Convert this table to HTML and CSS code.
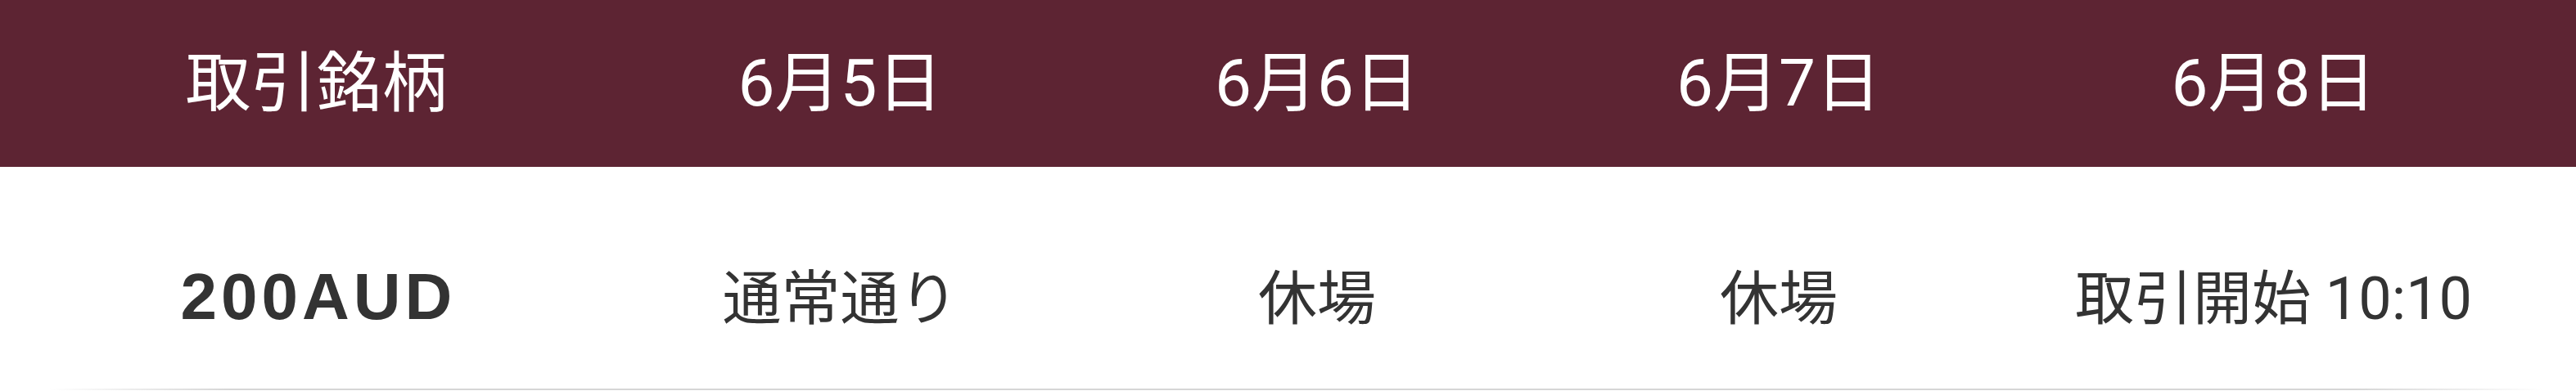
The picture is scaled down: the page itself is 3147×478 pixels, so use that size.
FILE: index.html
```html
<!DOCTYPE html>
<html lang="ja">
<head>
<meta charset="utf-8">
<title>取引スケジュール</title>
<link rel="stylesheet" href="styles.css">
</head>
<body>
<div class="schedule">
  <div class="grid">
    <div class="head">取引銘柄</div>
    <div class="head">6月5日</div>
    <div class="head">6月6日</div>
    <div class="head">6月7日</div>
    <div class="head">6月8日</div>
    <div class="cell sym">200AUD</div>
    <div class="cell">通常通り</div>
    <div class="cell">休場</div>
    <div class="cell">休場</div>
    <div class="cell">取引開始 10:10</div>
  </div>
  <div class="rule"></div>
</div>
</body>
</html>
```

FILE: styles.css
```css
html, body {
  margin: 0;
  padding: 0;
  background: #ffffff;
}

.schedule {
  width: 100%;
}

.grid {
  display: grid;
  grid-template-columns: 773fr 507fr 658fr 470fr 739fr;
}

.head {
  box-sizing: border-box;
  height: 204px;
  padding-top: 0;
  display: flex;
  align-items: center;
  justify-content: center;
  background: #5d2433;
  color: #ffffff;
  font-family: Roboto, "Noto Sans CJK JP", sans-serif;
  font-weight: 400;
  font-size: 80px;
  line-height: 80px;
  white-space: nowrap;
}

.cell {
  box-sizing: border-box;
  height: 271px;
  padding-top: 126px;
  text-align: center;
  color: #333333;
  font-family: Roboto, "Noto Sans CJK JP", sans-serif;
  font-weight: 400;
  font-size: 72px;
  line-height: 72px;
  white-space: nowrap;
}

.sym {
  padding-top: 123px;
  font-family: "Liberation Sans", Arial, sans-serif;
  font-weight: 700;
  font-size: 80px;
  letter-spacing: 5px;
  text-indent: 5px;
}

.rule {
  height: 2px;
  background: linear-gradient(to right,
    rgba(214, 214, 214, 0) 60px,
    #d6d6d6 280px,
    #d6d6d6 calc(100% - 270px),
    rgba(214, 214, 214, 0) calc(100% - 40px));
}
```
